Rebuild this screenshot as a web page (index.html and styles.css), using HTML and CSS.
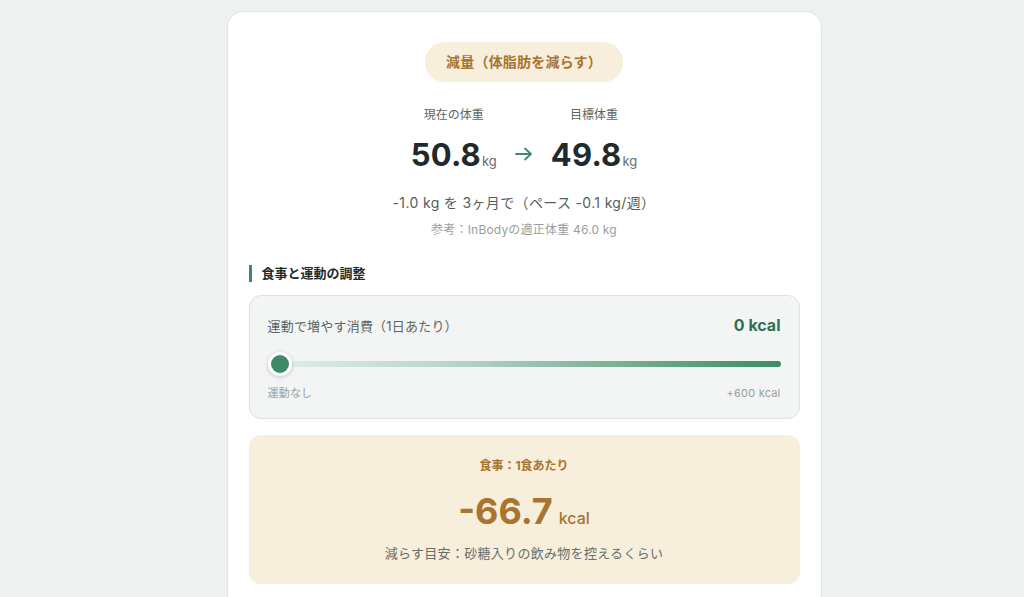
FILE: index.html
```html
<!DOCTYPE html>
<html lang="ja">
	<head>
		<meta charset="utf-8">
		<title>目標設定</title>
		<link rel="stylesheet" href="styles.css">
	</head>
	<body>
		<div class="card">
			<div class="mode">
				<span class="mode-badge">減量（体脂肪を減らす）</span>
			</div>

			<div class="weights">
				<div class="weight">
					<div class="weight-label">現在の体重</div>
					<div class="weight-value">50.8<span class="unit">kg</span></div>
				</div>
				<svg class="arrow" width="18" height="14" viewBox="0 0 18 14">
					<path d="M1 7H16M10 1.5L16 7L10 12.5" fill="none" stroke="#3d8a68" stroke-width="1.8" stroke-linecap="round" stroke-linejoin="round"/>
				</svg>
				<div class="weight">
					<div class="weight-label">目標体重</div>
					<div class="weight-value">49.8<span class="unit">kg</span></div>
				</div>
			</div>

			<p class="plan">-1.0 kg を 3ヶ月で（ペース -0.1 kg/週）</p>
			<p class="ref">参考：InBodyの適正体重 46.0 kg</p>

			<h2 class="section-title">食事と運動の調整</h2>

			<div class="exercise">
				<div class="exercise-head">
					<span class="exercise-label">運動で増やす消費（1日あたり）</span>
					<span class="exercise-value">0 kcal</span>
				</div>
				<div class="slider">
					<div class="slider-track"></div>
					<div class="slider-thumb"></div>
				</div>
				<div class="slider-range">
					<span>運動なし</span>
					<span>+600 kcal</span>
				</div>
			</div>

			<div class="meal">
				<div class="meal-label">食事：1食あたり</div>
				<div class="meal-value">-66.7<span class="unit">kcal</span></div>
				<div class="meal-hint">減らす目安：砂糖入りの飲み物を控えるくらい</div>
			</div>
		</div>
	</body>
</html>
```

FILE: styles.css
```css
*{margin:0;padding:0;box-sizing:border-box;}
body{
	background:#edf1ef;
	font-family:Inter,"Noto Sans CJK JP",sans-serif;
	color:#1f2a2a;
	display:flex;
	justify-content:center;
	padding:11px 0 0 24px;
}
.card{
	width:595px;
	background:#fff;
	border:1px solid #e1e6e3;
	border-radius:16px;
	padding:30px 21px 40px;
}
.mode{
	display:flex;
	justify-content:center;
}
.mode-badge{
	display:inline-block;
	height:40px;
	line-height:40px;
	padding:0 21px;
	border-radius:20px;
	background:#f7eedc;
	color:#a8742f;
	font-size:14px;
	font-weight:700;
	letter-spacing:0.2px;
}

/* 現在 → 目標 */
.weights{
	display:flex;
	justify-content:center;
	align-items:center;
	gap:18px;
	margin-top:24px;
}
.weight{
	display:flex;
	flex-direction:column;
	align-items:center;
	gap:13px;
}
.weight-label{
	font-size:12px;
	line-height:18px;
	color:#5c6563;
}
.weight-value{
	font-size:31px;
	line-height:36px;
	font-weight:700;
	letter-spacing:0.2px;
	color:#1f2a2a;
}
.weight-value .unit{
	font-size:13px;
	font-weight:400;
	color:#66706d;
	margin-left:1px;
	letter-spacing:0;
}
.arrow{
	margin-top:23px;
}
.plan{
	margin-top:14px;
	text-align:center;
	font-size:14px;
	line-height:20px;
	letter-spacing:0.35px;
	color:#555d5b;
}
.ref{
	margin-top:8px;
	text-align:center;
	font-size:12px;
	line-height:18px;
	letter-spacing:0.2px;
	color:#98a09d;
}
.section-title{
	margin-top:26px;
	padding-left:10px;
	border-left:3px solid #3d8a68;
	font-size:13px;
	line-height:17px;
	font-weight:700;
	color:#1f2a2a;
}

/* 運動スライダー */
.exercise{
	margin-top:13px;
	background:#f3f5f4;
	border:1px solid #dde3e0;
	border-radius:12px;
	padding:19px 18px 17px;
}
.exercise-head{
	display:flex;
	justify-content:space-between;
	align-items:center;
	height:20px;
}
.exercise-label{
	font-size:13px;
	letter-spacing:0.2px;
	color:#5c6563;
}
.exercise-value{
	font-size:16px;
	font-weight:700;
	color:#2f7155;
}
.slider{
	position:relative;
	height:24px;
	margin-top:17px;
	display:flex;
	align-items:center;
}
.slider-track{
	width:100%;
	height:6px;
	border-radius:3px;
	background:linear-gradient(to right,#e3efe9,#b9d6c9 35%,#3d8a68);
}
.slider-thumb{
	position:absolute;
	left:0;
	top:0;
	width:24px;
	height:24px;
	border-radius:50%;
	background:#3d8a68;
	border:3px solid #fff;
	box-shadow:0 1px 4px rgba(0,0,0,0.2);
}
.slider-range{
	display:flex;
	justify-content:space-between;
	margin-top:9px;
	font-size:11px;
	line-height:16px;
	letter-spacing:0.2px;
	color:#98a09d;
}

/* 食事 */
.meal{
	margin-top:16px;
	background:#f7eedc;
	border-radius:12px;
	padding:22px 18px 21px;
	text-align:center;
}
.meal-label{
	font-size:12px;
	line-height:18px;
	font-weight:700;
	color:#a8742f;
}
.meal-value{
	margin-top:14px;
	font-size:36px;
	line-height:44px;
	font-weight:700;
	color:#a8742f;
}
.meal-value .unit{
	font-size:16px;
	font-weight:500;
	margin-left:6px;
}
.meal-hint{
	margin-top:3px;
	font-size:13px;
	line-height:20px;
	letter-spacing:0.3px;
	color:#666e6b;
}
```
